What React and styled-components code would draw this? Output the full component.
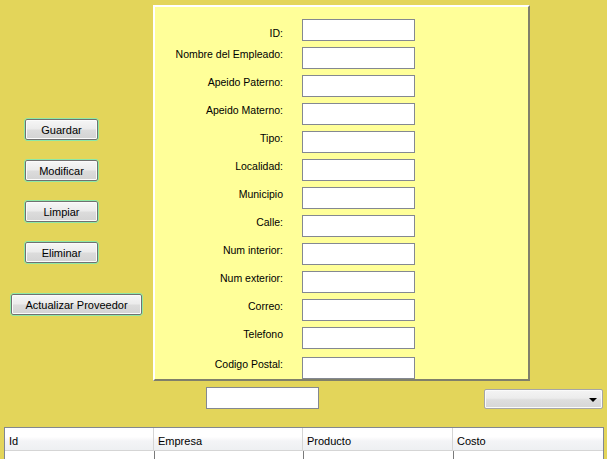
import React from "react";
import styled, { createGlobalStyle } from "styled-components";

const Global = createGlobalStyle`
  html, body { margin: 0; padding: 0; background: #e3d55a; }
  * { box-sizing: border-box; }
  body { font-family: "Liberation Sans", Arial, sans-serif; font-size: 11px; color: #000; }
`;

const Screen = styled.div`
  width: 607px;
  height: 459px;
  background: #e3d55a;
  overflow: hidden;
  display: flex;
  flex-direction: column;
`;

const TopRow = styled.div`
  display: flex;
  padding-top: 5px;
  flex-shrink: 0;
`;

const ButtonColumn = styled.div`
  width: 153px;
  display: flex;
  flex-direction: column;
  align-items: flex-start;
  padding-top: 114px;
`;

const ActionButton = styled.button`
  margin-left: ${(p) => p.$left}px;
  margin-top: ${(p) => p.$top || 0}px;
  width: ${(p) => p.$width}px;
  height: 21px;
  padding: 0;
  font-family: "Liberation Sans", Arial, sans-serif;
  font-size: 11px;
  color: #000;
  border: 1px solid #707070;
  border-radius: 2px;
  outline: 1px solid #8ee8a6;
  outline-offset: 0;
  box-shadow: inset 0 0 0 1px #fbfbfb;
  background: linear-gradient(#f6f6f6 0%, #ebebeb 48%, #dcdcdc 52%, #d3d3d3 100%);
`;

const Panel = styled.div`
  width: 377px;
  height: 376px;
  background: #ffff99;
  border: 2px solid;
  border-color: #ffffff #80806a #80806a #ffffff;
  padding-top: 12px;
  display: flex;
  flex-direction: column;
`;

const FieldRow = styled.div`
  display: grid;
  grid-template-columns: 128px 113px;
  column-gap: 19px;
  flex-shrink: 0;
  height: ${(p) => (p.$last ? 22 : 28)}px;
  margin-top: ${(p) => (p.$last ? 2 : 0)}px;
`;

const Label = styled.span`
  text-align: right;
  font-size: 10.5px;
  line-height: 13px;
  padding-top: ${(p) => p.$offset}px;
  white-space: nowrap;
`;

const TextBox = styled.div`
  width: 113px;
  height: 22px;
  background: #fff;
  border: 1px solid #848891;
`;

const SearchRow = styled.div`
  display: flex;
  align-items: flex-start;
  margin-top: 6px;
  flex-shrink: 0;
`;

const SearchBox = styled(TextBox)`
  margin-left: 206px;
`;

const Combo = styled.div`
  margin-left: auto;
  margin-right: 4px;
  margin-top: 2px;
  width: 119px;
  height: 20px;
  border: 1px solid #a6a6a6;
  border-radius: 2px;
  box-shadow: inset 0 0 0 1px #fafafa;
  background: linear-gradient(#f4f4f4 0%, #ececec 45%, #dedede 55%, #d6d6d6 100%);
  display: flex;
  align-items: center;
  justify-content: flex-end;
  padding-right: 5px;
`;

const Arrow = styled.span`
  width: 0;
  height: 0;
  border-left: 4px solid transparent;
  border-right: 4px solid transparent;
  border-top: 4px solid #000;
  margin-top: 2px;
`;

const Table = styled.div`
  margin-top: 18px;
  margin-left: 4px;
  width: 600px;
  flex: 1;
  background: #fff;
  border: 1px solid #828790;
  border-bottom: none;
  display: flex;
  flex-direction: column;
`;

const HeaderRow = styled.div`
  display: grid;
  grid-template-columns: 149px 149px 150px 1fr;
  height: 23px;
  border-bottom: 1px solid #d5d5d5;
`;

const HeaderCell = styled.div`
  display: flex;
  align-items: center;
  padding-left: 4px;
  padding-top: 3px;
  background: linear-gradient(#ffffff 0%, #ffffff 40%, #f3f4f6 60%, #eef0f2 100%);
  border-right: 1px solid #d5d5d5;
  &:last-child { border-right: none; }
`;

const BodyRow = styled.div`
  display: grid;
  grid-template-columns: 149px 149px 150px 1fr;
  flex: 1;
`;

const BodyCell = styled.div`
  border-right: 1px solid #7a7a7a;
  margin-right: -1px;
  &:last-child { border-right: none; }
`;

const fields = [
  ["ID:", 8],
  ["Nombre del Empleado:", 1],
  ["Apeido Paterno:", 1],
  ["Apeido Materno:", 1],
  ["Tipo:", 1],
  ["Localidad:", 1],
  ["Municipio", 1],
  ["Calle:", 1],
  ["Num interior:", 1],
  ["Num exterior:", 1],
  ["Correo:", 1],
  ["Telefono", 1],
  ["Codigo Postal:", 1],
];

const columns = ["Id", "Empresa", "Producto", "Costo"];

export default function App() {
  return (
    <>
      <Global />
      <Screen>
        <TopRow>
          <ButtonColumn>
            <ActionButton $left={25} $width={73}>Guardar</ActionButton>
            <ActionButton $left={25} $width={73} $top={20}>Modificar</ActionButton>
            <ActionButton $left={25} $width={73} $top={20}>Limpiar</ActionButton>
            <ActionButton $left={25} $width={73} $top={20}>Eliminar</ActionButton>
            <ActionButton $left={11} $width={131} $top={31}>Actualizar Proveedor</ActionButton>
          </ButtonColumn>
          <Panel>
            {fields.map(([label, off], i) => (
              <FieldRow key={label} $last={i === fields.length - 1}>
                <Label $offset={off}>{label}</Label>
                <TextBox />
              </FieldRow>
            ))}
          </Panel>
        </TopRow>
        <SearchRow>
          <SearchBox />
          <Combo>
            <Arrow />
          </Combo>
        </SearchRow>
        <Table>
          <HeaderRow>
            {columns.map((c) => (
              <HeaderCell key={c}>{c}</HeaderCell>
            ))}
          </HeaderRow>
          <BodyRow>
            {columns.map((c) => (
              <BodyCell key={c} />
            ))}
          </BodyRow>
        </Table>
      </Screen>
    </>
  );
}
